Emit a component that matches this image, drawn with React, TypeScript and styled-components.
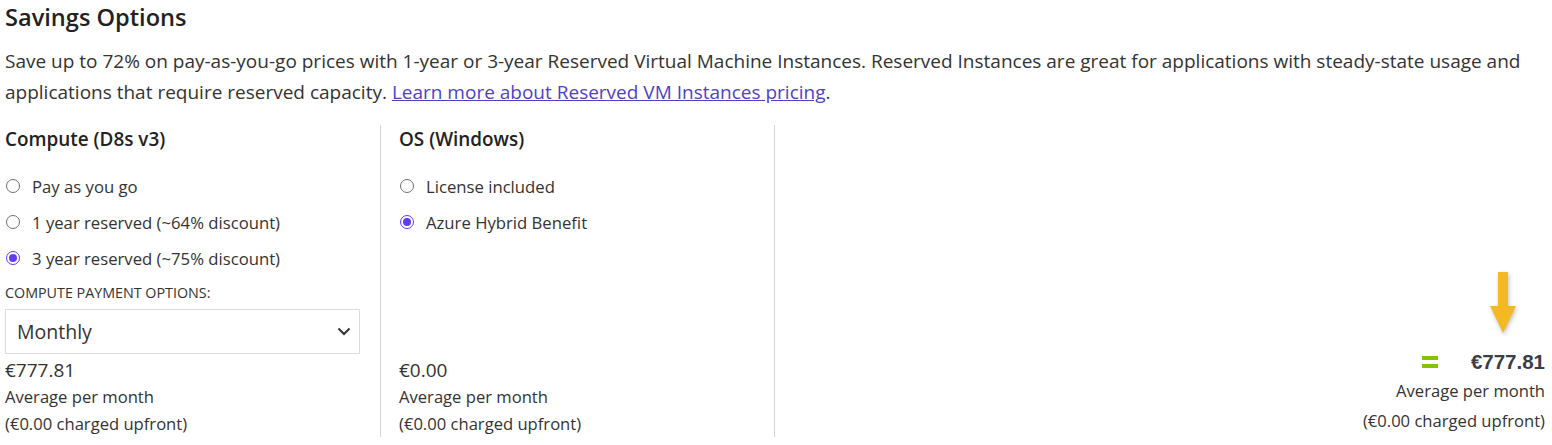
import React from "react";
import styled, { createGlobalStyle } from "styled-components";

const Global = createGlobalStyle`
  html, body { margin: 0; padding: 0; background: #fff; }
  body { font-family: "Open Sans", "Noto Sans", sans-serif; color: #333; }
  * { box-sizing: border-box; }
`;

const Page = styled.div`
  width: 1552px;
  height: 445px;
  padding: 0 7px 0 5px;
  overflow: hidden;
`;

const Title = styled.h2`
  margin: 0;
  padding-top: 2px;
  font-size: 23.6px;
  line-height: 30px;
  font-weight: 600;
  color: #222;
`;

const Intro = styled.p`
  margin: 14px 0 0;
  max-width: 1530px;
  font-size: 19px;
  line-height: 31px;
  color: #333;
`;

const Link = styled.a`
  color: #4f3fcb;
  text-decoration: underline;
`;

const Columns = styled.div`
  display: flex;
  margin-top: 17px;
  height: 312px;
`;

const Column = styled.div<{ $w?: number; $right?: boolean; $divider?: boolean; $pad?: number }>`
  display: flex;
  flex-direction: column;
  ${(p) => (p.$w ? `width: ${p.$w}px; flex: none;` : "flex: 1;")}
  padding-left: ${(p) => p.$pad ?? 0}px;
  padding-right: ${(p) => (p.$right ? 0 : 20)}px;
  border-right: ${(p) => (p.$divider ? "1px solid #d4d4d4" : "none")};
  align-items: ${(p) => (p.$right ? "flex-end" : "stretch")};
`;

const Heading = styled.h3`
  margin: 0;
  font-size: 18.9px;
  line-height: 28px;
  font-weight: 600;
  color: #222;
`;

const RadioList = styled.div`
  display: flex;
  flex-direction: column;
  margin-top: 15px;
`;

const RadioRow = styled.label`
  display: flex;
  align-items: center;
  height: 36px;
  font-size: 16.7px;
  color: #333;
  cursor: pointer;
`;

const RadioCircle = styled.span<{ $on?: boolean }>`
  width: 14px;
  height: 14px;
  border-radius: 50%;
  border: 1px solid ${(p) => (p.$on ? "#5f3df6" : "#707070")};
  margin: 0 12px 0 1px;
  display: flex;
  align-items: center;
  justify-content: center;
  flex: none;
  &::after {
    content: "";
    width: 8px;
    height: 8px;
    border-radius: 50%;
    background: ${(p) => (p.$on ? "#5f3df6" : "transparent")};
  }
`;

const SmallLabel = styled.div`
  font-size: 14.3px;
  line-height: 18px;
  margin-top: 8px;
  text-transform: uppercase;
  color: #333;
`;

const Select = styled.div`
  margin-top: 7px;
  height: 45px;
  width: 355px;
  border: 1px solid #dcdcdc;
  display: flex;
  align-items: center;
  justify-content: space-between;
  padding: 0 8px 0 11px;
  font-size: 19.5px;
  color: #333;
`;

const PriceBlock = styled.div<{ $right?: boolean }>`
  margin-top: ${(p) => (p.$right ? "0" : "auto")};
  display: flex;
  flex-direction: column;
  align-items: ${(p) => (p.$right ? "flex-end" : "flex-start")};
  padding-bottom: ${(p) => (p.$right ? 2 : 0)}px;
`;

const Price = styled.div`
  font-size: 19px;
  line-height: 26px;
  color: #333;
`;

const Sub = styled.div<{ $lh?: number }>`
  font-size: 16.6px;
  line-height: ${(p) => p.$lh ?? 27}px;
  color: #333;
`;

const TotalRow = styled.div`
  display: flex;
  align-items: center;
  gap: 33px;
  height: 28px;
`;

const Equals = styled.span`
  display: flex;
  flex-direction: column;
  gap: 4px;
  &::before, &::after {
    content: "";
    width: 16px;
    height: 4px;
    background: #84c400;
  }
`;

const TotalPrice = styled.div`
  font-family: "Liberation Sans", Arial, sans-serif;
  font-size: 20.5px;
  font-weight: 700;
  color: #3c3c46;
`;

const ArrowWrap = styled.div`
  margin-top: auto;
  margin-right: 28px;
  margin-bottom: 9px;
  filter: drop-shadow(1px 2px 2px rgba(0,0,0,0.25));
`;

const Options = ({ items }: { items: { label: string; on?: boolean }[] }) => (
  <RadioList>
    {items.map((i) => (
      <RadioRow key={i.label}>
        <RadioCircle $on={i.on} />
        {i.label}
      </RadioRow>
    ))}
  </RadioList>
);

const Prices = ({ amount }: { amount: string }) => (
  <PriceBlock>
    <Price>{amount}</Price>
    <Sub>Average per month</Sub>
    <Sub>(€0.00 charged upfront)</Sub>
  </PriceBlock>
);

export default function App() {
  return (
    <Page>
      <Global />
      <Title>Savings Options</Title>
      <Intro>
        Save up to 72% on pay-as-you-go prices with 1-year or 3-year Reserved Virtual Machine Instances. Reserved
        Instances are great for applications with steady-state usage and applications that require reserved capacity.{" "}
        <Link href="#">Learn more about Reserved VM Instances pricing</Link>.
      </Intro>
      <Columns>
        <Column $w={376} $divider>
          <Heading>Compute (D8s v3)</Heading>
          <Options
            items={[
              { label: "Pay as you go" },
              { label: "1 year reserved (~64% discount)" },
              { label: "3 year reserved (~75% discount)", on: true },
            ]}
          />
          <SmallLabel>Compute payment options:</SmallLabel>
          <Select>
            Monthly
            <svg width="14" height="9" viewBox="0 0 14 9">
              <path d="M1.5 1.5 L7 7 L12.5 1.5" fill="none" stroke="#333" strokeWidth="2" />
            </svg>
          </Select>
          <Prices amount="€777.81" />
        </Column>
        <Column $w={394} $divider $pad={18}>
          <Heading>OS (Windows)</Heading>
          <Options items={[{ label: "License included" }, { label: "Azure Hybrid Benefit", on: true }]} />
          <Prices amount="€0.00" />
        </Column>
        <Column $right>
          <ArrowWrap>
            <svg width="28" height="62" viewBox="0 0 28 62">
              <path d="M9 0 H19 V34 H27 L14 61 L1 34 H9 Z" fill="#f4b922" />
            </svg>
          </ArrowWrap>
          <PriceBlock $right>
            <TotalRow>
              <Equals />
              <TotalPrice>€777.81</TotalPrice>
            </TotalRow>
            <Sub $lh={30}>Average per month</Sub>
            <Sub $lh={29}>(€0.00 charged upfront)</Sub>
          </PriceBlock>
        </Column>
      </Columns>
    </Page>
  );
}
